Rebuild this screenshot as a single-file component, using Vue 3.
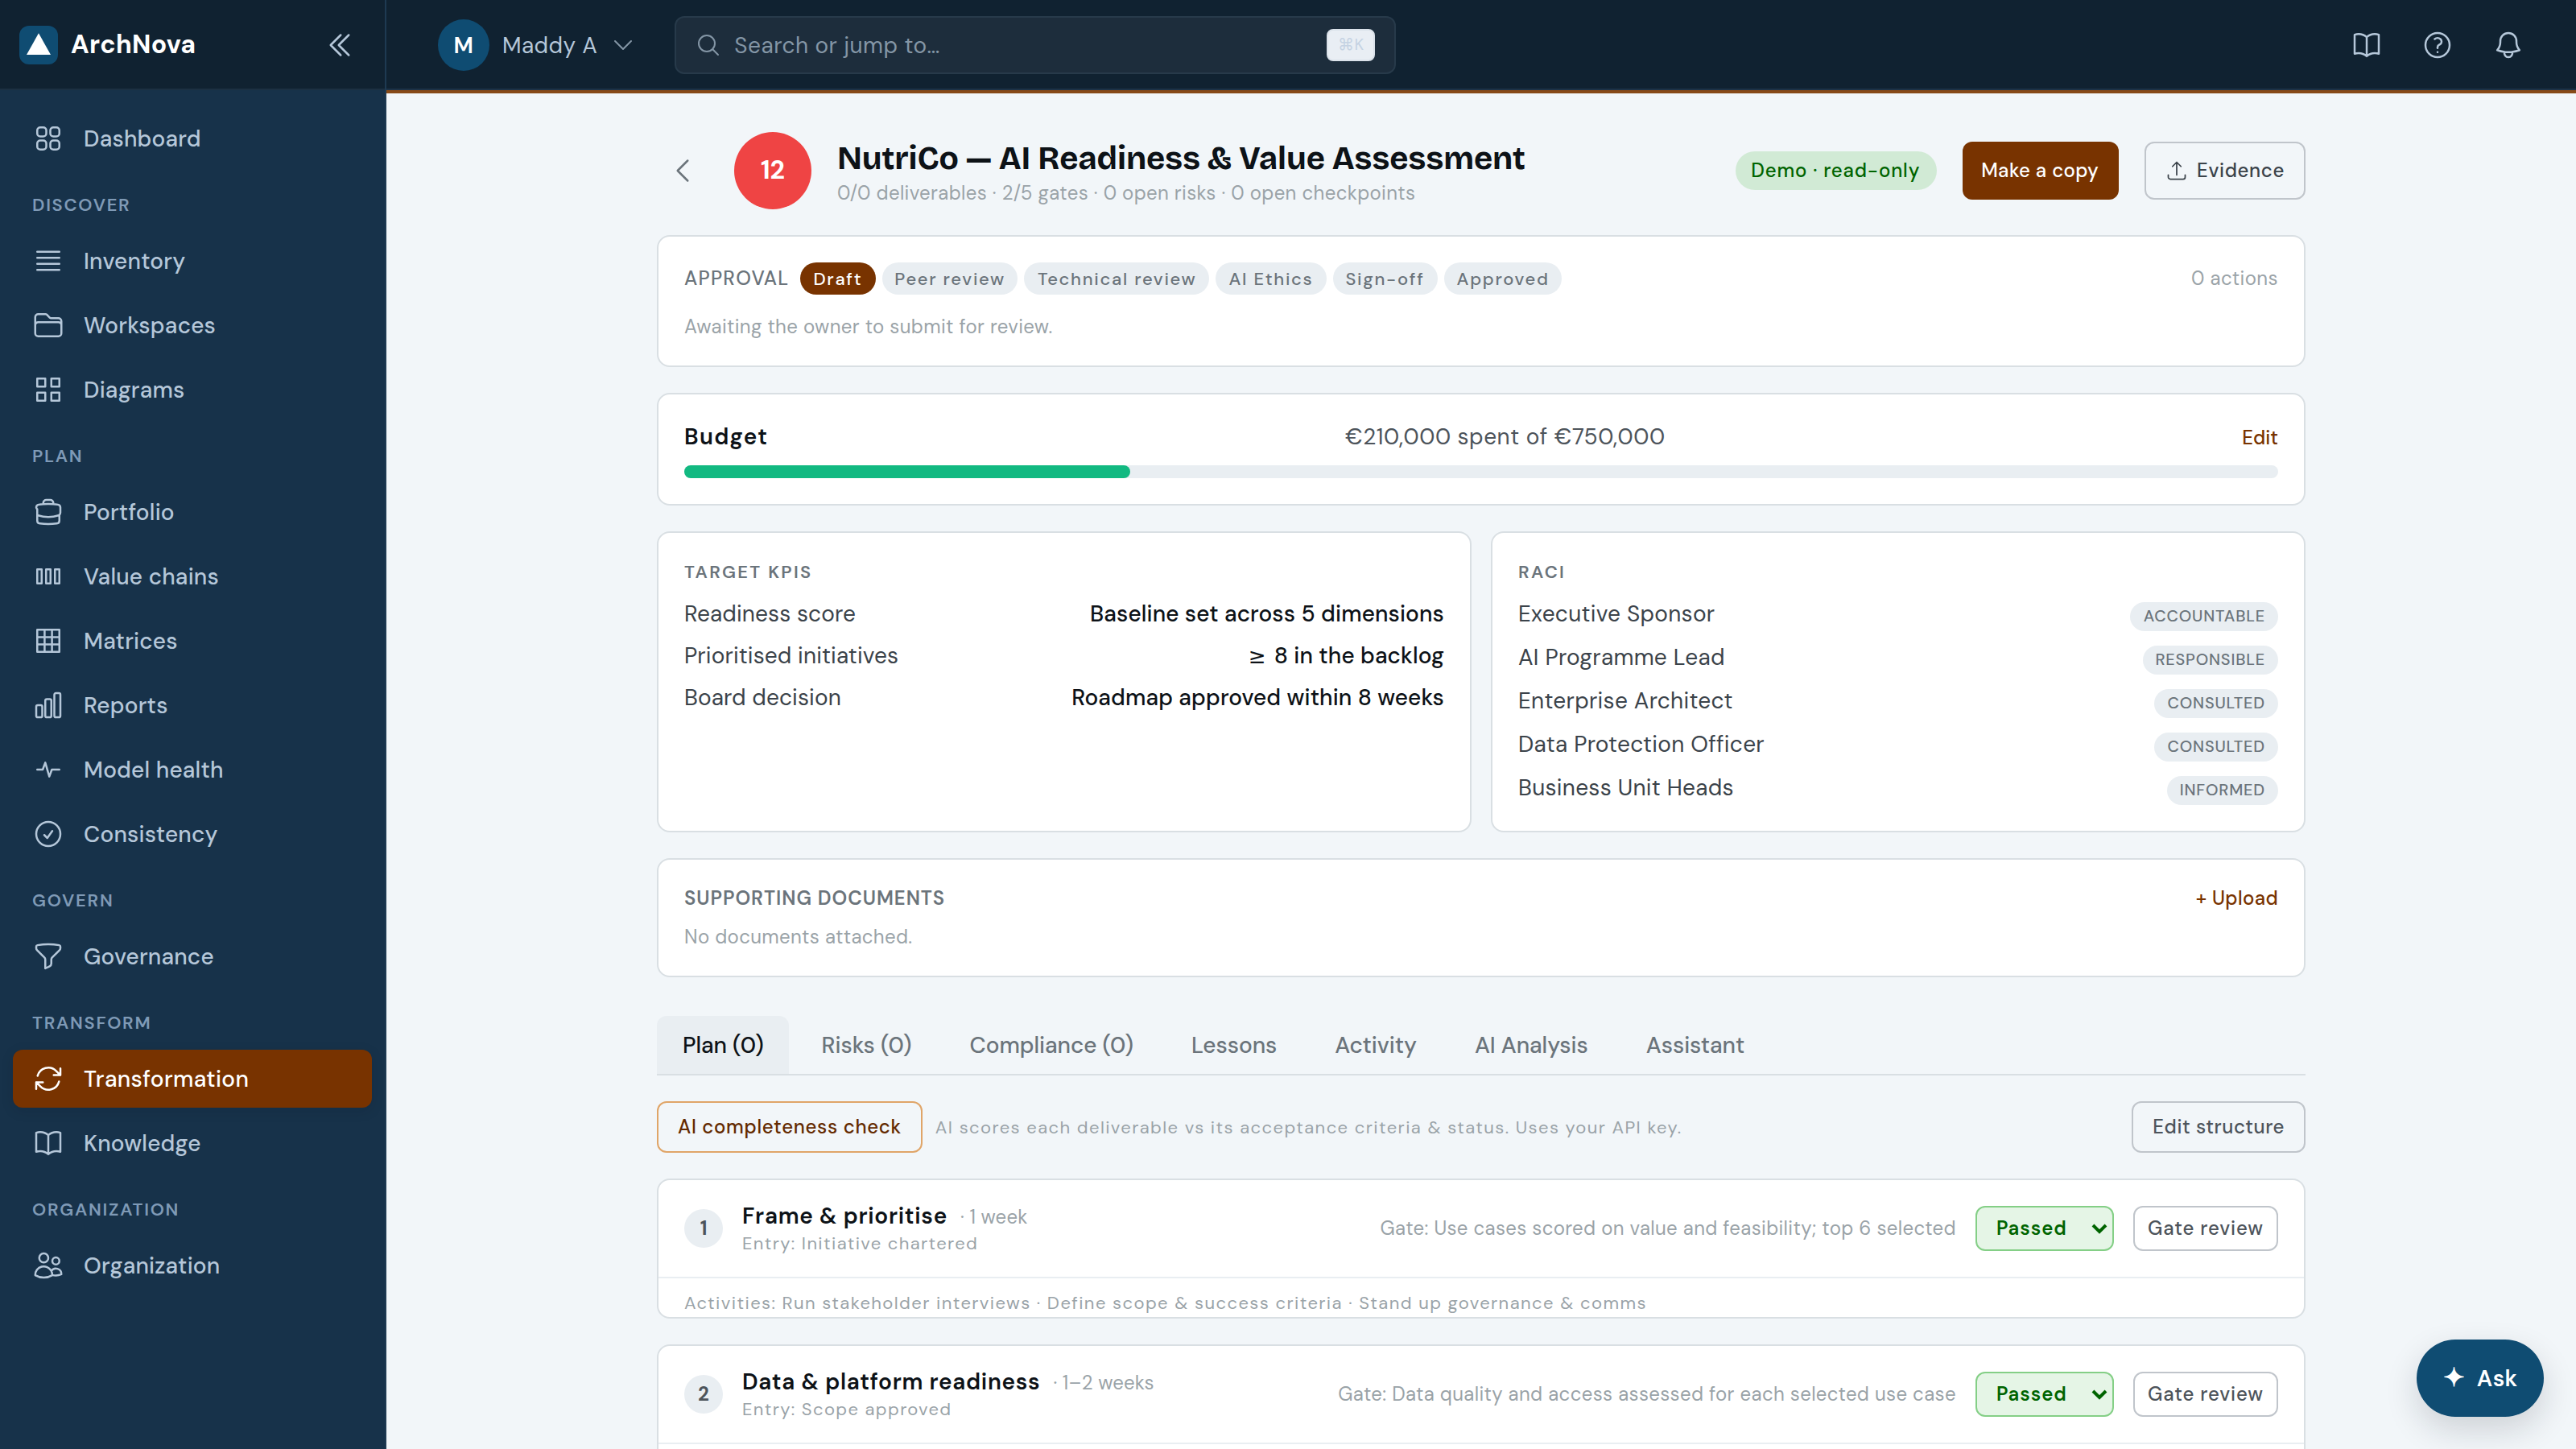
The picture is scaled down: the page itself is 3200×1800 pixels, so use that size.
<script setup>
import { ref } from 'vue'

// ── Icons (24px grid, stroked) ─────────────────────────────────────────
const icons = {
  squares:
    'M3.75 6A2.25 2.25 0 016 3.75h2.25A2.25 2.25 0 0110.5 6v2.25a2.25 2.25 0 01-2.25 2.25H6a2.25 2.25 0 01-2.25-2.25V6zM3.75 15.75A2.25 2.25 0 016 13.5h2.25a2.25 2.25 0 012.25 2.25V18a2.25 2.25 0 01-2.25 2.25H6A2.25 2.25 0 013.75 18v-2.25zM13.5 6a2.25 2.25 0 012.25-2.25H18A2.25 2.25 0 0120.25 6v2.25A2.25 2.25 0 0118 10.5h-2.25a2.25 2.25 0 01-2.25-2.25V6zM13.5 15.75a2.25 2.25 0 012.25-2.25H18a2.25 2.25 0 012.25 2.25V18A2.25 2.25 0 0118 20.25h-2.25A2.25 2.25 0 0113.5 18v-2.25z',
  bars: 'M3.75 5.25h16.5m-16.5 4.5h16.5m-16.5 4.5h16.5m-16.5 4.5h16.5',
  folder:
    'M2.25 12.75V12A2.25 2.25 0 014.5 9.75h15A2.25 2.25 0 0121.75 12v.75m-8.69-6.44l-2.12-2.12a1.5 1.5 0 00-1.061-.44H4.5A2.25 2.25 0 002.25 6v12a2.25 2.25 0 002.25 2.25h15A2.25 2.25 0 0021.75 18V9a2.25 2.25 0 00-2.25-2.25h-5.379a1.5 1.5 0 01-1.06-.44z',
  diagrams: 'M3.75 3.75h6v6h-6zM14.25 3.75h6v6h-6zM3.75 14.25h6v6h-6zM14.25 14.25h6v6h-6z',
  briefcase:
    'M20.25 14.15v4.25c0 1.094-.787 2.036-1.872 2.18-2.087.277-4.216.42-6.378.42s-4.291-.143-6.378-.42c-1.085-.144-1.872-1.086-1.872-2.18V9.9m16.5 4.25a2.18 2.18 0 00.75-1.661V8.706c0-1.081-.768-2.015-1.837-2.175a48.114 48.114 0 00-3.413-.387m4.5 8.006c-.194.165-.42.295-.673.38A23.978 23.978 0 0112 15.75c-2.648 0-5.195-.429-7.577-1.22a2.016 2.016 0 01-.673-.38M3.75 9.9A2.18 2.18 0 013 8.706c0-1.081.768-2.015 1.837-2.175a48.111 48.111 0 013.413-.387m7.5 0V5.25A2.25 2.25 0 0013.5 3h-3a2.25 2.25 0 00-2.25 2.25v.894m7.5 0a48.667 48.667 0 00-7.5 0',
  chains: 'M3.75 6.75h3.3v10.5h-3.3zM10.35 6.75h3.3v10.5h-3.3zM16.95 6.75h3.3v10.5h-3.3z',
  grid: 'M3.75 3.75h16.5v16.5H3.75zM3.75 9.25h16.5M3.75 14.75h16.5M9.25 3.75v16.5M14.75 3.75v16.5',
  chart:
    'M3 13.125C3 12.504 3.504 12 4.125 12h2.25c.621 0 1.125.504 1.125 1.125v6.75C7.5 20.496 6.996 21 6.375 21h-2.25A1.125 1.125 0 013 19.875v-6.75zM9.75 8.625c0-.621.504-1.125 1.125-1.125h2.25c.621 0 1.125.504 1.125 1.125v11.25c0 .621-.504 1.125-1.125 1.125h-2.25a1.125 1.125 0 01-1.125-1.125V8.625zM16.5 4.125c0-.621.504-1.125 1.125-1.125h2.25C20.496 3 21 3.504 21 4.125v15.75c0 .621-.504 1.125-1.125 1.125h-2.25a1.125 1.125 0 01-1.125-1.125V4.125z',
  pulse: 'M3.75 12h4.1l1.9-5.2 3 10.4 1.9-5.2h5.6',
  check: 'M9 12.75L11.25 15 15 9.75M21 12a9 9 0 11-18 0 9 9 0 0118 0z',
  funnel:
    'M12 3c2.755 0 5.455.232 8.083.678.533.09.917.556.917 1.096v1.044a2.25 2.25 0 01-.659 1.591l-5.432 5.432a2.25 2.25 0 00-.659 1.591v2.927a2.25 2.25 0 01-1.244 2.013L9.75 21v-6.568a2.25 2.25 0 00-.659-1.591L3.659 7.409A2.25 2.25 0 013 5.818V4.774c0-.54.384-1.006.917-1.096A48.32 48.32 0 0112 3z',
  refresh:
    'M16.023 9.348h4.992v-.001M2.985 19.644v-4.992m0 0h4.992m-4.993 0l3.181 3.183a8.25 8.25 0 0013.803-3.7M4.031 9.865a8.25 8.25 0 0113.803-3.7l3.181 3.182m0-4.991v4.99',
  book:
    'M12 6.042A8.967 8.967 0 006 3.75c-1.052 0-2.062.18-3 .512v14.25A8.987 8.987 0 016 18c2.305 0 4.408.867 6 2.292m0-14.25a8.966 8.966 0 016-2.292c1.052 0 2.062.18 3 .512v14.25A8.987 8.987 0 0018 18a8.967 8.967 0 00-6 2.292m0-14.25v14.25',
  users:
    'M15 19.128a9.38 9.38 0 002.625.372 9.337 9.337 0 004.121-.952 4.125 4.125 0 00-7.533-2.493M15 19.128v-.003c0-1.113-.285-2.16-.786-3.07M15 19.128v.106A12.318 12.318 0 018.624 21c-2.331 0-4.512-.645-6.374-1.766l-.001-.109a6.375 6.375 0 0111.964-3.07M12 6.375a3.375 3.375 0 11-6.75 0 3.375 3.375 0 016.75 0zm8.25 2.25a2.625 2.625 0 11-5.25 0 2.625 2.625 0 015.25 0z',
  help:
    'M9.879 7.519c1.171-1.025 3.071-1.025 4.242 0 1.172 1.025 1.172 2.687 0 3.712-.203.179-.43.326-.67.442-.745.361-1.45.999-1.45 1.827v.75M21 12a9 9 0 11-18 0 9 9 0 0118 0zm-9 5.25h.008v.008H12v-.008z',
  bell:
    'M14.857 17.082a23.848 23.848 0 005.454-1.31A8.967 8.967 0 0118 9.75v-.7V9A6 6 0 006 9v.75a8.967 8.967 0 01-2.312 6.022c1.733.64 3.56 1.085 5.455 1.31m5.714 0a24.255 24.255 0 01-5.714 0m5.714 0a3 3 0 11-5.714 0',
  collapse: 'M18.75 19.5l-7.5-7.5 7.5-7.5m-6 15L5.25 12l7.5-7.5',
  down: 'M19.5 8.25l-7.5 7.5-7.5-7.5',
  back: 'M15.75 19.5L8.25 12l7.5-7.5',
  search: 'M21 21l-5.197-5.197m0 0A7.5 7.5 0 105.196 5.196a7.5 7.5 0 0010.607 10.607z',
  upload: 'M3 16.5v2.25A2.25 2.25 0 005.25 21h13.5A2.25 2.25 0 0021 18.75V16.5m-13.5-9L12 3m0 0l4.5 4.5M12 3v13.5',
}

const nav = [
  { items: [{ label: 'Dashboard', icon: 'squares' }] },
  {
    title: 'Discover',
    items: [
      { label: 'Inventory', icon: 'bars' },
      { label: 'Workspaces', icon: 'folder' },
      { label: 'Diagrams', icon: 'diagrams' },
    ],
  },
  {
    title: 'Plan',
    items: [
      { label: 'Portfolio', icon: 'briefcase' },
      { label: 'Value chains', icon: 'chains' },
      { label: 'Matrices', icon: 'grid' },
      { label: 'Reports', icon: 'chart' },
      { label: 'Model health', icon: 'pulse' },
      { label: 'Consistency', icon: 'check' },
    ],
  },
  { title: 'Govern', items: [{ label: 'Governance', icon: 'funnel' }] },
  {
    title: 'Transform',
    items: [
      { label: 'Transformation', icon: 'refresh' },
      { label: 'Knowledge', icon: 'book' },
    ],
  },
  { title: 'Organization', items: [{ label: 'Organization', icon: 'users' }] },
]
const activeItem = ref('Transformation')

const stages = ['Draft', 'Peer review', 'Technical review', 'AI Ethics', 'Sign-off', 'Approved']
const stage = ref('Draft')

const budget = { spent: 210000, total: 750000 }
const euro = (n) => '€' + n.toLocaleString('en-US')

const kpis = [
  { name: 'Readiness score', target: 'Baseline set across 5 dimensions' },
  { name: 'Prioritised initiatives', op: '≥', target: '8 in the backlog' },
  { name: 'Board decision', target: 'Roadmap approved within 8 weeks' },
]

const raci = [
  { who: 'Executive Sponsor', role: 'Accountable' },
  { who: 'AI Programme Lead', role: 'Responsible' },
  { who: 'Enterprise Architect', role: 'Consulted' },
  { who: 'Data Protection Officer', role: 'Consulted' },
  { who: 'Business Unit Heads', role: 'Informed' },
]

const tabs = ['Plan (0)', 'Risks (0)', 'Compliance (0)', 'Lessons', 'Activity', 'AI Analysis', 'Assistant']
const tab = ref('Plan (0)')

const phases = ref([
  {
    name: 'Frame & prioritise',
    time: '1 week',
    entry: 'Initiative chartered',
    gate: 'Use cases scored on value and feasibility; top 6 selected',
    status: 'Passed',
    activities: 'Run stakeholder interviews · Define scope & success criteria · Stand up governance & comms',
  },
  {
    name: 'Data & platform readiness',
    time: '1–2 weeks',
    entry: 'Scope approved',
    gate: 'Data quality and access assessed for each selected use case',
    status: 'Passed',
    activities: '',
  },
])
</script>

<template>
  <div class="screen">
    <div class="app">
      <aside class="sidebar">
        <div class="brand">
          <span class="brand-logo">
            <svg viewBox="0 0 24 24"><path d="M12 4.6l7.5 13.4h-15z" fill="#fff" /></svg>
          </span>
          <span class="brand-name">ArchNova</span>
          <button class="collapse">
            <svg class="icon" viewBox="0 0 24 24"><path :d="icons.collapse" /></svg>
          </button>
        </div>
        <nav class="nav">
          <section v-for="(group, i) in nav" :key="i">
            <div v-if="group.title" class="nav-title">{{ group.title }}</div>
            <div class="nav-list">
              <a
                v-for="item in group.items"
                :key="item.label"
                class="nav-item"
                :class="{ active: item.label === activeItem }"
                @click="activeItem = item.label"
              >
                <svg class="icon" viewBox="0 0 24 24"><path :d="icons[item.icon]" /></svg>
                {{ item.label }}
              </a>
            </div>
          </section>
        </nav>
      </aside>

      <div class="body">
        <header class="topbar">
          <button class="user">
            <span class="avatar">M</span>
            Maddy A
            <svg class="icon sm" viewBox="0 0 24 24"><path :d="icons.down" /></svg>
          </button>
          <div class="search">
            <svg class="icon sm" viewBox="0 0 24 24"><path :d="icons.search" /></svg>
            <span class="search-hint">Search or jump to…</span>
            <kbd>⌘K</kbd>
          </div>
          <div class="top-actions">
            <button v-for="name in ['book', 'help', 'bell']" :key="name" class="top-btn">
              <svg class="icon" viewBox="0 0 24 24"><path :d="icons[name]" /></svg>
            </button>
          </div>
        </header>
        <div class="accent"></div>

        <main class="main">
          <div class="title-row">
            <button class="back">
              <svg class="icon" viewBox="0 0 24 24"><path :d="icons.back" /></svg>
            </button>
            <span class="score">12</span>
            <div class="title-text">
              <h1>NutriCo — AI Readiness &amp; Value Assessment</h1>
              <p>0/0 deliverables · 2/5 gates · 0 open risks · 0 open checkpoints</p>
            </div>
            <span class="demo">Demo · read-only</span>
            <button class="btn primary">Make a copy</button>
            <button class="btn outline">
              <svg class="icon xs" viewBox="0 0 24 24"><path :d="icons.upload" /></svg>
              Evidence
            </button>
          </div>

          <div class="card">
            <div class="approval">
              <span class="approval-label">APPROVAL</span>
              <span v-for="s in stages" :key="s" class="chip" :class="{ current: s === stage }">{{ s }}</span>
              <span class="approval-count">0 actions</span>
            </div>
            <p class="approval-note">Awaiting the owner to submit for review.</p>
          </div>

          <div class="card">
            <div class="budget">
              <span class="budget-title">Budget</span>
              <span class="budget-value">{{ euro(budget.spent) }} spent of {{ euro(budget.total) }}</span>
              <button class="link">Edit</button>
            </div>
            <div class="track">
              <div class="fill" :style="{ width: (budget.spent / budget.total) * 100 + '%' }"></div>
            </div>
          </div>

          <div class="two-col">
            <div class="card">
              <h3>Target KPIs</h3>
              <div class="rows">
                <div v-for="k in kpis" :key="k.name" class="row">
                  <span>{{ k.name }}</span>
                  <span class="kpi-target"><span v-if="k.op" class="op">{{ k.op }}</span>{{ k.target }}</span>
                </div>
              </div>
            </div>
            <div class="card">
              <h3>RACI</h3>
              <div class="rows">
                <div v-for="r in raci" :key="r.who" class="row raci">
                  <span>{{ r.who }}</span>
                  <span class="role">{{ r.role }}</span>
                </div>
              </div>
            </div>
          </div>

          <div class="card">
            <div class="docs-head">
              <h3 class="docs-title">Supporting documents</h3>
              <button class="link">+ Upload</button>
            </div>
            <p class="docs-empty">No documents attached.</p>
          </div>

          <div class="tabs">
            <button v-for="t in tabs" :key="t" class="tab" :class="{ on: t === tab }" @click="tab = t">{{ t }}</button>
          </div>

          <div class="tools">
            <button class="btn amber">AI completeness check</button>
            <span class="tools-hint">AI scores each deliverable vs its acceptance criteria &amp; status. Uses your API key.</span>
            <button class="btn ghost">Edit structure</button>
          </div>

          <div v-for="(p, i) in phases" :key="p.name" class="phase">
            <div class="phase-head">
              <span class="phase-num">{{ i + 1 }}</span>
              <div class="phase-text">
                <div class="phase-name">{{ p.name }}<span class="phase-time">· {{ p.time }}</span></div>
                <div class="phase-entry">Entry: {{ p.entry }}</div>
              </div>
              <span class="phase-gate">Gate: {{ p.gate }}</span>
              <select v-model="p.status" class="phase-status">
                <option>Passed</option>
              </select>
              <button class="btn review">Gate review</button>
            </div>
            <div class="phase-acts">
              <template v-if="p.activities">Activities: {{ p.activities }}</template>
            </div>
          </div>
        </main>
      </div>

      <button class="ask"><span class="ask-star">✦</span>Ask</button>
    </div>
  </div>
</template>

<style>
body {
  background: #f2f6f9;
}
</style>

<style scoped>
/* Designed on a 1600x900 canvas and scaled up for the large display */
.screen {
  width: 3200px;
  height: 1800px;
  overflow: hidden;
}
.app {
  position: relative;
  display: flex;
  width: 1600px;
  height: 900px;
  overflow: hidden;
  transform: scale(2);
  transform-origin: 0 0;
  background: #f2f6f9;
  color: #0d1217;
  font-family: 'DM Sans', Inter, sans-serif;
  font-size: 14px;
  line-height: 20px;
}
*,
*::before {
  box-sizing: border-box;
}
h1,
h3,
p {
  margin: 0;
}
button {
  margin: 0;
  padding: 0;
  border: 0;
  background: none;
  color: inherit;
  font: inherit;
  letter-spacing: inherit;
}
.icon {
  flex: none;
  width: 20px;
  height: 20px;
  fill: none;
  stroke: currentColor;
  stroke-width: 1.5;
  stroke-linecap: round;
  stroke-linejoin: round;
}
.icon.sm {
  width: 16px;
  height: 16px;
}
.icon.xs {
  width: 14px;
  height: 14px;
}

/* Sidebar */
.sidebar {
  flex: none;
  width: 240px;
  background: #17324a;
  border-right: 1px solid #1e3a52;
  color: #b5c7d9;
}
.brand {
  display: flex;
  align-items: center;
  height: 56px;
  padding: 0 12px;
  background: #102231;
  border-bottom: 1px solid #1c3042;
}
.brand-logo {
  width: 24px;
  height: 24px;
  margin-right: 8px;
  border-radius: 6px;
  background: #0f4c72;
}
.brand-logo svg {
  display: block;
}
.brand-name {
  flex: 1;
  color: #fff;
  font-size: 16px;
  font-weight: 700;
  letter-spacing: 0.16px;
}
.collapse {
  padding: 6px;
  height: 32px;
}
.nav {
  padding: 12px 8px;
}
.nav-title {
  padding: 15px 12px 9px;
  color: #7f9ab6;
  font-size: 11px;
  font-weight: 600;
  line-height: 16px;
  letter-spacing: 0.86px;
  text-transform: uppercase;
}
.nav-list {
  display: flex;
  flex-direction: column;
  gap: 4px;
}
.nav-item {
  display: flex;
  align-items: center;
  gap: 12px;
  height: 36px;
  padding: 0 12px;
  border-radius: 6px;
  font-weight: 500;
  letter-spacing: 0.1px;
}
.nav-item.active {
  background: #783300;
  color: #fff;
  letter-spacing: 0.17px;
  box-shadow: 0 2px 8px rgba(8, 20, 32, 0.12);
}

/* Top bar */
.body {
  flex: 1;
  min-width: 0;
}
.topbar {
  display: flex;
  align-items: center;
  height: 56px;
  padding: 0 24px;
  background: #102231;
  border-bottom: 1px solid #1c3247;
  color: #b5c7d9;
}
.accent {
  height: 2px;
  background: #874a18;
}
.user {
  display: flex;
  align-items: center;
  gap: 8px;
  margin-right: 16px;
  padding: 4px 8px;
  letter-spacing: 0.2px;
}
.avatar {
  width: 32px;
  border-radius: 50%;
  background: #0f4c72;
  color: #fff;
  font-weight: 600;
  line-height: 32px;
  text-align: center;
}
.user .icon {
  color: #8496a6;
}
.search {
  display: flex;
  align-items: center;
  gap: 8px;
  width: 448px;
  height: 36px;
  padding: 0 12px;
  border: 1px solid #273a4a;
  border-radius: 6px;
  background: #1d2d3c;
  color: #8496a6;
  letter-spacing: 0.24px;
}
.search-hint {
  flex: 1;
}
kbd {
  width: 30px;
  height: 20px;
  border: 1px solid #dbe2ea;
  border-radius: 4px;
  background: #e9eef4;
  color: #c5d3e3;
  font-family: 'DM Sans', Inter, sans-serif;
  font-size: 10px;
  line-height: 18px;
  text-align: center;
}
.top-actions {
  display: flex;
  gap: 8px;
  margin-left: auto;
}
.top-btn {
  width: 36px;
  height: 36px;
  padding: 8px;
}

/* Page */
.main {
  display: flex;
  flex-direction: column;
  gap: 16px;
  width: 1024px;
  margin: 0 auto;
  padding-top: 24px;
}
.title-row {
  display: flex;
  align-items: center;
  gap: 16px;
}
.back {
  height: 32px;
  padding: 6px;
  color: #6b747b;
}
.score {
  width: 48px;
  border-radius: 50%;
  background: #ef4444;
  color: #fff;
  font-size: 16px;
  font-weight: 700;
  line-height: 48px;
  text-align: center;
}
.title-text {
  flex: 1;
}
.title-text h1 {
  font-family: 'Bricolage Grotesque', 'DM Sans', Inter, sans-serif;
  font-size: 20px;
  font-weight: 700;
  line-height: 28px;
  letter-spacing: -0.075px;
}
.title-text p {
  color: #9aa3a8;
  font-size: 12px;
  line-height: 16px;
  letter-spacing: 0.17px;
}
.demo {
  padding: 4px 10px;
  border-radius: 12px;
  background: #d1ead5;
  color: #006400;
  font-size: 12px;
  font-weight: 500;
  line-height: 16px;
  letter-spacing: 0.42px;
}
.btn {
  display: flex;
  align-items: center;
  gap: 6px;
  height: 32px;
  padding: 0 12px;
  border: 1px solid #c0c5cb;
  border-radius: 6px;
  color: #3b434a;
  font-size: 12px;
  font-weight: 500;
  letter-spacing: 0.2px;
}
.btn.primary {
  height: 36px;
  border: 0;
  background: #783300;
  color: #fff;
}
.btn.outline {
  height: 36px;
  letter-spacing: 0.32px;
}
.btn.amber {
  border-color: #e0a568;
  color: #642a00;
  letter-spacing: 0.34px;
}
.btn.ghost {
  margin-left: auto;
  color: #4d545b;
  letter-spacing: 0.28px;
}

.card {
  padding: 16px;
  border: 1px solid #d9dfe3;
  border-radius: 8px;
  background: #fff;
}
.approval {
  display: flex;
  align-items: center;
  gap: 4px;
}
.approval-label {
  margin-right: 3px;
  color: #6b747b;
  font-size: 12px;
  font-weight: 500;
  letter-spacing: 0.62px;
}
.chip {
  padding: 1.5px 8px 2.5px;
  border-radius: 10px;
  background: #e9eef2;
  color: #6b747b;
  font-size: 11px;
  font-weight: 500;
  line-height: 16px;
  letter-spacing: 0.84px;
}
.chip.current {
  background: #783300;
  color: #fff;
}
.approval-count {
  margin-left: auto;
  color: #9aa3a8;
  font-size: 12px;
  letter-spacing: 0.2px;
}
.approval-note {
  margin-top: 12px;
  color: #9aa3a8;
  font-size: 12px;
  line-height: 16px;
  letter-spacing: 0.165px;
}
.budget {
  display: flex;
  align-items: center;
  justify-content: space-between;
}
.budget-title {
  font-weight: 600;
  letter-spacing: 0.66px;
}
.budget-value {
  color: #4d545b;
  letter-spacing: 0.26px;
}
.link {
  color: #783300;
  font-size: 12px;
  font-weight: 500;
  line-height: 16px;
}
.budget .link {
  padding-top: 1px;
}
.docs-head .link {
  letter-spacing: 0.17px;
}
.track {
  height: 8px;
  margin-top: 8px;
  border-radius: 4px;
  background: #e9eef2;
}
.fill {
  height: 8px;
  border-radius: 4px;
  background: #12b981;
}
.two-col {
  display: grid;
  grid-template-columns: 1fr 1fr;
  gap: 12px;
}
h3 {
  color: #6b747b;
  font-size: 11px;
  font-weight: 600;
  line-height: 16px;
  letter-spacing: 1.14px;
  text-transform: uppercase;
}
.rows {
  display: flex;
  flex-direction: column;
  gap: 6px;
  margin-top: 8px;
}
.row {
  display: flex;
  align-items: baseline;
  justify-content: space-between;
  height: 20px;
  color: #3b434a;
  letter-spacing: 0.06px;
}
.row.raci {
  height: 21px;
  letter-spacing: 0.14px;
}
.kpi-target {
  color: #0d1217;
  font-weight: 500;
}
.op {
  margin-right: 5px;
  font-family: 'DejaVu Sans', sans-serif;
  font-size: 13px;
  font-weight: 400;
  line-height: 1;
}
.role {
  padding: 1.5px 8px;
  border-radius: 9px;
  background: #e9eef2;
  color: #6b747b;
  font-size: 10px;
  font-weight: 500;
  line-height: 15px;
  letter-spacing: 0.4px;
  text-transform: uppercase;
}
.docs-head {
  display: flex;
  align-items: center;
  justify-content: space-between;
  height: 16px;
}
.docs-title {
  font-size: 12px;
  letter-spacing: 0.48px;
}
.docs-empty {
  margin-top: 8px;
  color: #9aa3a8;
  font-size: 12px;
  line-height: 16px;
  letter-spacing: 0.165px;
}

.tabs {
  display: flex;
  gap: 4px;
  margin-top: 8px;
  border-bottom: 1px solid #d9dfe3;
}
.tab {
  height: 36px;
  padding: 0 16px;
  border-radius: 6px 6px 0 0;
  color: #6b747b;
  font-weight: 500;
  letter-spacing: -0.03px;
}
.tab.on {
  background: #e9eef2;
  color: #0d1217;
}
.tools {
  display: flex;
  align-items: center;
}
.tools-hint {
  margin-left: 8px;
  padding-bottom: 1px;
  color: #9aa3a8;
  font-size: 11px;
  letter-spacing: 0.7px;
}

.phase {
  border: 1px solid #d9dfe3;
  border-radius: 8px;
  background: #fff;
}
.phase-head {
  display: flex;
  align-items: center;
  gap: 12px;
  height: 60px;
  padding: 0 16px;
}
.phase-num {
  width: 24px;
  border-radius: 50%;
  background: #e9eef2;
  color: #4d545b;
  font-size: 12px;
  font-weight: 700;
  line-height: 24px;
  text-align: center;
}
.phase-text {
  flex: 1;
}
.phase-name {
  height: 20px;
  font-weight: 600;
  letter-spacing: 0.34px;
}
.phase-time {
  margin-left: 8px;
  color: #9aa3a8;
  font-size: 12px;
  font-weight: 400;
  line-height: 1;
  letter-spacing: 0.08px;
}
.phase-entry {
  padding-bottom: 1px;
  color: #9aa3a8;
  font-size: 11px;
  line-height: 15px;
  letter-spacing: 0.68px;
}
.phase-gate {
  color: #9aa3a8;
  font-size: 12px;
  letter-spacing: 0.165px;
}
.phase-status {
  width: 86px;
  height: 28px;
  padding: 4px 0 4px 8px;
  border: 1px solid #84cf86;
  border-radius: 6px;
  background: #e5f5e6;
  color: #006400;
  font-family: inherit;
  font-size: 12px;
  font-weight: 600;
  letter-spacing: 0.45px;
}
.btn.review {
  height: 28px;
  padding: 0 8px;
  color: #4d545b;
  letter-spacing: 0.45px;
}
.phase-acts {
  height: 25px;
  padding: 8px 16px 0;
  border-top: 1px solid #e9eef2;
  color: #9aa3a8;
  font-size: 11px;
  line-height: 15px;
  letter-spacing: 0.7px;
}

.ask {
  position: absolute;
  right: 20px;
  bottom: 20px;
  display: flex;
  align-items: center;
  justify-content: center;
  gap: 8px;
  width: 79px;
  height: 48px;
  border-radius: 24px;
  background: #0f4c72;
  color: #fff;
  font-weight: 600;
  letter-spacing: 0.15px;
  box-shadow: 0 8px 20px rgba(16, 24, 40, 0.16);
}
.ask-star {
  font-size: 16px;
}
</style>
